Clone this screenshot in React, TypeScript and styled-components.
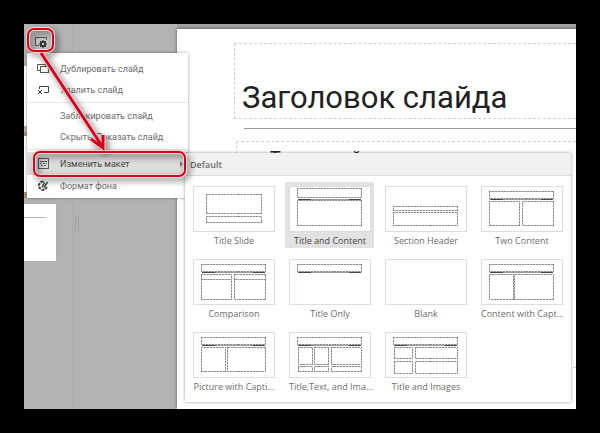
import React from "react";
import styled, { createGlobalStyle, css } from "styled-components";

const GlobalStyle = createGlobalStyle`
  * { box-sizing: border-box; }
  body { margin: 0; background: #000; }
  button { font: inherit; color: inherit; border: 0; background: none; padding: 0; cursor: pointer; }
`;

const Frame = styled.div`
  display: flex;
  min-height: 100vh;
  padding: 24px;
  background: #000;
  font-family: "Open Sans", "Noto Sans", sans-serif;
  font-size: 9px;
  color: #6c6c6c;
`;

const Editor = styled.div`
  position: relative;
  display: flex;
  flex: 1;
  overflow: hidden;
  background: #b3b3b3;
`;

const SlidePanel = styled.aside`
  display: flex;
  flex-direction: column;
  align-items: flex-start;
  flex: none;
  width: 49px;
  border-right: 1px solid #acacac;
`;

const PanelToolbar = styled.div`
  display: flex;
  padding: 8px 0 0 6px;
  height: 42px;
`;

const SettingsButton = styled.button`
  display: flex;
  align-items: center;
  justify-content: center;
  width: 21px;
  height: 19px;
  background: #c6c6c6;
`;

const SlideThumb = styled.div<{ $accent?: boolean; $height: number }>`
  width: 32px;
  height: ${(p) => p.$height}px;
  margin-bottom: 6px;
  padding: 13px 10px 0 0;
  background: #fff;
  box-shadow: 0 0 1px #999;
  ${(p) =>
    p.$accent &&
    css`
      border: solid #b98f6d;
      border-width: 4px 0 6px;
    `}
`;

const ThumbRule = styled.hr`
  margin: 0;
  border: 0;
  border-top: 1px solid #b5b5b5;
`;

const Splitter = styled.div`
  display: flex;
  flex: 1;
  padding: 192px 0 0 2px;
`;

const Grip = styled.span`
  width: 4px;
  height: 15px;
  border: 1px solid #9f9f9f;
  border-width: 0 1px;
`;

const Workspace = styled.main`
  display: flex;
  flex: none;
  width: calc(100% - 153px);
  padding-top: 5px;
  background: linear-gradient(#a4a4a4, #989898) top / 100% 5px no-repeat;
`;

const Slide = styled.section`
  flex: 1;
  min-width: 0;
  padding: 14px 0 0 57px;
  background: #fff;
  box-shadow: 0 0 3px #555;
  font-family: Roboto, sans-serif;
  color: #222;
`;

const TitleBox = styled.div`
  display: flex;
  align-items: flex-end;
  height: 76px;
  padding: 0 0 2px 7px;
  border: 1px dashed #d0d0d0;
  border-right: 0;
`;

const SlideTitle = styled.h1`
  margin: 0;
  font-size: 31px;
  line-height: 36px;
  font-weight: 400;
  white-space: nowrap;
`;

const SlideRule = styled.hr`
  margin: 9px 0 12px 10px;
  border: 0;
  border-top: 1px solid #999;
`;

const BodyBox = styled.div`
  height: 227px;
  margin-left: 2px;
  padding: 5px 0 0 33px;
  border: 1px dashed #d0d0d0;
  border-right: 0;
  font-size: 18px;
  line-height: 22px;
`;

const ContextMenu = styled.nav`
  position: absolute;
  left: 3px;
  top: 29px;
  width: 161px;
  padding: 5px 0 2px;
  background: #fff;
  box-shadow: 0 0 3px rgba(0, 0, 0, 0.4);
  font-family: Roboto, "Open Sans", sans-serif;
`;

const MenuItem = styled.button<{ $active?: boolean }>`
  display: flex;
  align-items: center;
  width: 100%;
  height: 21px;
  padding: 0 5px 0 10px;
  font-size: 9px;
  line-height: 14px;
  text-align: left;
  white-space: nowrap;
  ${(p) =>
    p.$active &&
    css`
      height: 23px;
      background: #dcdcdc;
      color: #444;
    `}
`;

const ItemIcon = styled.span`
  display: flex;
  width: 23px;
`;

const Caret = styled.span`
  margin-left: auto;
  border: 3px solid transparent;
  border-left-color: #777;
  border-right: 0;
`;

const Divider = styled.hr`
  margin: 2px 0;
  border: 0;
  border-top: 1px solid #e6e6e6;
`;

const LayoutMenu = styled.section`
  position: absolute;
  left: 161px;
  right: 5px;
  top: 129px;
  background: #fff;
  box-shadow: 0 0 3px rgba(0, 0, 0, 0.4);
`;

const MenuHeading = styled.h2`
  margin: 0;
  padding: 0 5px;
  height: 23px;
  background: #f1f1f1;
  border-bottom: 1px solid #ddd;
  font-size: 9px;
  line-height: 24px;
  font-weight: 600;
`;

const LayoutGrid = styled.div`
  display: grid;
  grid-template-columns: repeat(4, minmax(0, 1fr));
  gap: 7px;
  padding: 6px 5px 8px 4px;
`;

const LayoutCell = styled.button<{ $selected?: boolean }>`
  display: flex;
  flex-direction: column;
  gap: 2px;
  height: 66px;
  padding: 4px 3px 0 4px;
  min-width: 0;
  background: ${(p) => (p.$selected ? "#e2e2e2" : "none")};
  color: ${(p) => (p.$selected ? "#444" : "inherit")};
`;

const Preview = styled.svg`
  display: block;
  width: 100%;
  height: 47px;
  background: #fff;
  border: 1px solid #dcdce6;
`;

const CellLabel = styled.span`
  width: 100%;
  line-height: 14px;
  font-size: 9px;
  text-align: center;
  white-space: nowrap;
`;

const Annotation = styled.svg`
  position: absolute;
  left: 0;
  top: 0;
  pointer-events: none;
  filter: drop-shadow(3px 3px 3px rgba(0, 0, 0, 0.5));
`;

type Box = [number, number, number, number];
const header: Box = [7, 4, 66, 7];

const layouts: { name: string; boxes: Box[]; rule?: boolean; selected?: boolean }[] = [
  { name: "Title Slide", boxes: [[12, 7, 57, 20], [12, 30, 57, 6]] },
  { name: "Title and Content", boxes: [[7, 1, 66, 9], [7, 13, 66, 26]], rule: true, selected: true },
  { name: "Section Header", boxes: [[7, 19, 66, 5], [7, 26, 66, 13]] },
  { name: "Two Content", boxes: [header, [7, 14, 31, 25], [41, 14, 32, 25]], rule: true },
  { name: "Comparison", boxes: [header, [7, 14, 31, 5], [41, 14, 32, 5], [7, 19, 31, 21], [41, 19, 32, 21]], rule: true },
  { name: "Title Only", boxes: [header], rule: true },
  { name: "Blank", boxes: [] },
  { name: "Content with Capt...", boxes: [header, [7, 14, 25, 26], [33, 14, 40, 26]], rule: true },
  { name: "Picture with Capti...", boxes: [header, [7, 14, 25, 25], [34, 14, 39, 25]], rule: true },
  { name: "Title,Text, and Ima...", boxes: [header, [8, 14, 14, 18], [25, 14, 14, 18], [42, 14, 31, 18], [8, 34, 14, 5], [25, 34, 14, 5], [42, 34, 31, 5]], rule: true },
  { name: "Title and Images", boxes: [header, [8, 14, 19, 12], [30, 14, 43, 12], [8, 29, 19, 12], [30, 29, 43, 12]], rule: true },
];

function LayoutPreview({ boxes, rule }: { boxes: Box[]; rule?: boolean }) {
  return (
    <Preview viewBox="0 0 80 45" preserveAspectRatio="xMinYMin meet" shapeRendering="crispEdges" aria-hidden="true">
      {boxes.map(([x, y, w, h], i) => (
        <g key={i} fill="none">
          <rect x={x + 0.5} y={y + 0.5} width={w} height={h} stroke="#cfcfcf" />
          <rect x={x + 0.5} y={y + 0.5} width={w} height={h} stroke="#8a8a8a" strokeDasharray="2 1" />
        </g>
      ))}
      {rule && <path d="M8 12.5H73" stroke="#999" />}
      {rule && <path d="M8 12.5H21M60 12.5H73" stroke="#444" />}
    </Preview>
  );
}

const GearSlideIcon = () => (
  <svg width="12" height="12" viewBox="0 0 12 12" fill="none" stroke="#555">
    <path d="M4 9.5H.5V1.5H11.5V4" />
    <circle cx="8" cy="8" r="2.2" stroke="#333" strokeWidth="2" />
    <path d="M8 4V5M8 11V12M4 8H5M11 8H12M5.2 5.2L6 6M10 10L10.8 10.8M5.2 10.8L6 10M10 6L10.8 5.2" stroke="#333" />
  </svg>
);

const DuplicateIcon = () => (
  <svg width="13" height="12" viewBox="0 0 13 12" fill="none" stroke="#555">
    <path d="M3 7.5H.5V1.5H8.5V3" />
    <rect x="3.5" y="3.5" width="8" height="6" />
  </svg>
);

const DeleteIcon = () => (
  <svg width="13" height="12" viewBox="0 0 13 12" fill="none" stroke="#444">
    <path d="M2.5 5V2.5H11.5V8.5H7M1 6L5 10M5 6L1 10" />
  </svg>
);

const LayoutIcon = () => (
  <svg width="13" height="12" viewBox="0 0 13 12" fill="none" stroke="#555">
    <rect x="1.5" y=".5" width="10" height="10" />
    <path d="M3 3.5H10" />
    <path d="M3 5.5H10M4 7.5H9" strokeDasharray="2 1" />
  </svg>
);

const FormatIcon = () => (
  <svg width="13" height="12" viewBox="0 0 13 12" fill="none" stroke="#444">
    <path d="M6.5 1.5L4 2 2 4.5 2.5 8 5 10 8 9.5 10 7" strokeWidth="2" strokeDasharray="3 1" />
    <path d="M5 7.5L7.5 2.5M7 7.5L10.5 2" strokeWidth="1.5" />
  </svg>
);

export default function App() {
  return (
    <>
      <GlobalStyle />
      <Frame>
        <Editor>
          <SlidePanel>
            <PanelToolbar>
              <SettingsButton aria-label="Настройки слайда">
                <GearSlideIcon />
              </SettingsButton>
            </PanelToolbar>
            <SlideThumb $height={60} />
            <SlideThumb $accent $height={66} />
            <SlideThumb $height={57}>
              <ThumbRule />
            </SlideThumb>
          </SlidePanel>
          <Splitter>
            <Grip />
          </Splitter>
          <Workspace>
            <Slide>
              <TitleBox>
                <SlideTitle>Заголовок слайда</SlideTitle>
              </TitleBox>
              <SlideRule />
              <BodyBox>Текст слайда</BodyBox>
            </Slide>
          </Workspace>

          <ContextMenu>
            <MenuItem><ItemIcon><DuplicateIcon /></ItemIcon>Дублировать слайд</MenuItem>
            <MenuItem><ItemIcon><DeleteIcon /></ItemIcon>Удалить слайд</MenuItem>
            <Divider />
            <MenuItem><ItemIcon />Заблокировать слайд</MenuItem>
            <MenuItem><ItemIcon />Скрыть/Показать слайд</MenuItem>
            <Divider />
            <MenuItem $active><ItemIcon><LayoutIcon /></ItemIcon>Изменить макет<Caret /></MenuItem>
            <MenuItem><ItemIcon><FormatIcon /></ItemIcon>Формат фона</MenuItem>
          </ContextMenu>

          <LayoutMenu>
            <MenuHeading>Default</MenuHeading>
            <LayoutGrid>
              {layouts.map((l) => (
                <LayoutCell key={l.name} $selected={l.selected}>
                  <LayoutPreview boxes={l.boxes} rule={l.rule} />
                  <CellLabel>{l.name}</CellLabel>
                </LayoutCell>
              ))}
            </LayoutGrid>
          </LayoutMenu>

          <Annotation width="180" height="170" viewBox="0 0 180 170" fill="none">
            <g stroke="#f9d5cf" strokeWidth="4">
              <rect x="4" y="5" width="25" height="22" rx="6" />
              <rect x="10" y="128" width="151" height="24" rx="6" />
              <path d="M17 29L78 122M67 115L79 124L79 111" strokeWidth="5" />
            </g>
            <g stroke="#d2051f" strokeWidth="2">
              <rect x="4" y="5" width="25" height="22" rx="6" />
              <rect x="10" y="128" width="151" height="24" rx="6" />
              <path d="M17 29L78 122M67 115L79 124L79 111" strokeWidth="3" />
            </g>
          </Annotation>
        </Editor>
      </Frame>
    </>
  );
}
